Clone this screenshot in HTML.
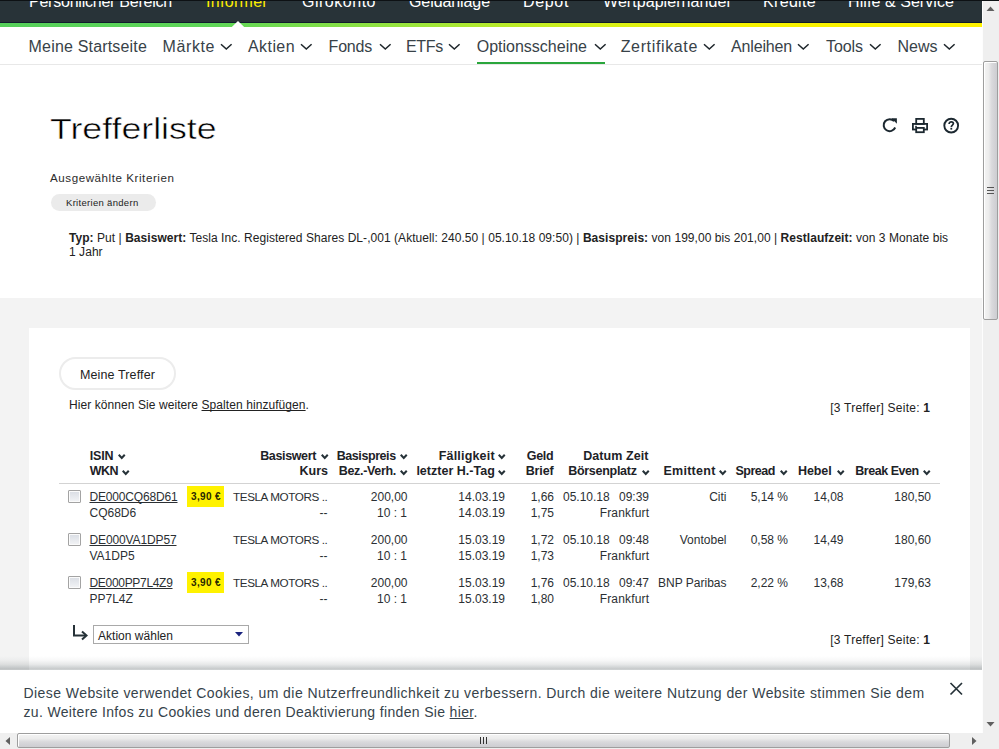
<!DOCTYPE html>
<html><head><meta charset="utf-8"><title>Trefferliste</title>
<style>
html,body{margin:0;padding:0;width:999px;height:749px;overflow:hidden;background:#fff;position:relative}
body{font-family:"Liberation Sans",sans-serif}
.t{position:absolute;white-space:nowrap;font-family:"Liberation Sans",sans-serif}
b{font-weight:bold}
u{text-decoration:underline;text-decoration-skip-ink:none}
</style></head><body>
<div style="position:absolute;left:0;top:0;width:982px;height:23px;background:#283338"></div>
<div style="position:absolute;left:0;top:0;width:982px;height:1px;background:#0d1114"></div>
<div style="position:absolute;left:0;top:22px;width:982px;height:1px;background:#101c2c"></div>
<div style="position:absolute;left:0;top:23px;width:982px;height:4px;background:linear-gradient(90deg,#55cf5a 0%,#5fd658 22%,#9be53c 42%,#d4f01a 60%,#f6f200 75%,#fff200 100%)"></div>
<svg style="position:absolute;left:231px;top:20px" width="14" height="8"><polygon points="0.8,7 7,1.1 13.2,7" fill="#fff"/></svg>
<div style="position:absolute;left:0;top:27px;width:982px;height:37px;background:#fff"></div>
<div class="t" style="top:-6.34px;font-size:16.00px;line-height:16.00px;color:#fff;letter-spacing:-0.231px;left:29.00px;">Persönlicher Bereich</div>
<div class="t" style="top:-6.34px;font-size:16.00px;line-height:16.00px;color:#ffee00;letter-spacing:0.304px;left:206.00px;">Informer</div>
<div class="t" style="top:-6.34px;font-size:16.00px;line-height:16.00px;color:#fff;letter-spacing:0.515px;left:302.00px;">Girokonto</div>
<div class="t" style="top:-6.34px;font-size:16.00px;line-height:16.00px;color:#fff;letter-spacing:-0.084px;left:409.00px;">Geldanlage</div>
<div class="t" style="top:-6.34px;font-size:16.00px;line-height:16.00px;color:#fff;letter-spacing:0.661px;left:523.00px;">Depot</div>
<div class="t" style="top:-6.34px;font-size:16.00px;line-height:16.00px;color:#fff;letter-spacing:0.063px;left:603.00px;">Wertpapierhandel</div>
<div class="t" style="top:-6.34px;font-size:16.00px;line-height:16.00px;color:#fff;letter-spacing:0.330px;left:763.00px;">Kredite</div>
<div class="t" style="top:-6.34px;font-size:16.00px;line-height:16.00px;color:#fff;letter-spacing:0.072px;left:848.00px;">Hilfe &amp; Service</div>
<div style="position:absolute;left:0;top:0;width:999px;height:1px;background:#0d1114"></div>
<div class="t" style="top:39.46px;font-size:16.00px;line-height:16.00px;color:#384248;letter-spacing:0.175px;left:28.60px;">Meine Startseite</div>
<div class="t" style="top:39.46px;font-size:16.00px;line-height:16.00px;color:#384248;letter-spacing:0.584px;left:162.60px;">Märkte</div>
<svg style="position:absolute;left:219.5px;top:42px" width="13" height="10"><polyline points="1,2.2 6.3,7.1 11.6,2.2" fill="none" stroke="#1f272c" stroke-width="1.5"/></svg>
<div class="t" style="top:39.46px;font-size:16.00px;line-height:16.00px;color:#384248;letter-spacing:0.422px;left:248.00px;">Aktien</div>
<svg style="position:absolute;left:299.5px;top:42px" width="13" height="10"><polyline points="1,2.2 6.3,7.1 11.6,2.2" fill="none" stroke="#1f272c" stroke-width="1.5"/></svg>
<div class="t" style="top:39.46px;font-size:16.00px;line-height:16.00px;color:#384248;letter-spacing:-0.213px;left:328.60px;">Fonds</div>
<svg style="position:absolute;left:378.5px;top:42px" width="13" height="10"><polyline points="1,2.2 6.3,7.1 11.6,2.2" fill="none" stroke="#1f272c" stroke-width="1.5"/></svg>
<div class="t" style="top:39.46px;font-size:16.00px;line-height:16.00px;color:#384248;letter-spacing:-0.304px;left:406.00px;">ETFs</div>
<svg style="position:absolute;left:447.5px;top:42px" width="13" height="10"><polyline points="1,2.2 6.3,7.1 11.6,2.2" fill="none" stroke="#1f272c" stroke-width="1.5"/></svg>
<div class="t" style="top:39.46px;font-size:16.00px;line-height:16.00px;color:#384248;letter-spacing:0.001px;left:476.70px;">Optionsscheine</div>
<svg style="position:absolute;left:593.5px;top:42px" width="13" height="10"><polyline points="1,2.2 6.3,7.1 11.6,2.2" fill="none" stroke="#1f272c" stroke-width="1.5"/></svg>
<div class="t" style="top:39.46px;font-size:16.00px;line-height:16.00px;color:#384248;letter-spacing:0.642px;left:620.70px;">Zertifikate</div>
<svg style="position:absolute;left:702.5px;top:42px" width="13" height="10"><polyline points="1,2.2 6.3,7.1 11.6,2.2" fill="none" stroke="#1f272c" stroke-width="1.5"/></svg>
<div class="t" style="top:39.46px;font-size:16.00px;line-height:16.00px;color:#384248;letter-spacing:-0.159px;left:731.00px;">Anleihen</div>
<svg style="position:absolute;left:796.5px;top:42px" width="13" height="10"><polyline points="1,2.2 6.3,7.1 11.6,2.2" fill="none" stroke="#1f272c" stroke-width="1.5"/></svg>
<div class="t" style="top:39.46px;font-size:16.00px;line-height:16.00px;color:#384248;letter-spacing:-0.070px;left:826.00px;">Tools</div>
<svg style="position:absolute;left:868.5px;top:42px" width="13" height="10"><polyline points="1,2.2 6.3,7.1 11.6,2.2" fill="none" stroke="#1f272c" stroke-width="1.5"/></svg>
<div class="t" style="top:39.46px;font-size:16.00px;line-height:16.00px;color:#384248;letter-spacing:-0.002px;left:897.50px;">News</div>
<svg style="position:absolute;left:942.5px;top:42px" width="13" height="10"><polyline points="1,2.2 6.3,7.1 11.6,2.2" fill="none" stroke="#1f272c" stroke-width="1.5"/></svg>
<div style="position:absolute;left:0;top:64px;width:982px;height:1px;background:#e8e8e8"></div>
<div style="position:absolute;left:477px;top:62px;width:128px;height:2px;background:#2aa63c"></div>
<div class="t" style="left:50px;top:113.61px;font-size:30px;line-height:30px;color:#000;-webkit-text-stroke:0.5px #fff;transform:scaleX(1.19);transform-origin:0 0">Trefferliste</div>
<svg style="position:absolute;left:880px;top:115px" width="82" height="22" viewBox="0 0 82 22">
<path d="M14.2,6.2 A6,6 0 1 0 15.2,12.5" fill="none" stroke="#1c2830" stroke-width="2"/>
<polygon points="11.4,3.3 16.9,3.3 16.9,8.8" fill="#1c2830"/>
<rect x="32.9" y="8.9" width="14.2" height="5.6" fill="#fff" stroke="#1c2830" stroke-width="1.8"/>
<rect x="36.2" y="3.9" width="7.6" height="5" fill="#fff" stroke="#1c2830" stroke-width="1.8"/>
<rect x="36.2" y="12.9" width="7.6" height="4.3" fill="#fff" stroke="#1c2830" stroke-width="1.8"/>
<rect x="35.2" y="10.8" width="1.6" height="1.5" fill="#1c2830"/>
<circle cx="71.2" cy="10.6" r="6.9" fill="none" stroke="#1c2830" stroke-width="1.9"/>
<path d="M69.1,9.0 C69.1,7.4 70.1,6.8 71.3,6.8 C72.6,6.8 73.4,7.6 73.4,8.6 C73.4,10.0 71.3,10.2 71.3,11.9" fill="none" stroke="#1c2830" stroke-width="1.7"/>
<rect x="70.4" y="12.8" width="1.8" height="1.8" fill="#1c2830"/>
</svg>
<div class="t" style="top:171.78px;font-size:11.60px;line-height:11.60px;color:#2b2b2b;letter-spacing:0.556px;left:50.00px;">Ausgewählte Kriterien</div>
<div style="position:absolute;left:51px;top:194px;width:105px;height:17px;border-radius:9px;background:#ebebeb"></div>
<div class="t" style="top:197.76px;font-size:9.50px;line-height:9.50px;color:#222;letter-spacing:0.307px;left:66.00px;">Kriterien ändern</div>
<div class="t" style="left:69px;top:230.59px;font-size:12px;line-height:14.5px;color:#222;letter-spacing:0.049px;width:900px"><b>Typ:</b> Put | <b>Basiswert:</b> Tesla Inc. Registered Shares DL-,001 (Aktuell: 240.50 | 05.10.18 09:50) | <b>Basispreis:</b> von 199,00 bis 201,00 | <b>Restlaufzeit:</b> von 3 Monate bis<br>1 Jahr</div>
<div style="position:absolute;left:0;top:298px;width:982px;height:435px;background:#f3f3f3"></div>
<div style="position:absolute;left:29px;top:328px;width:941px;height:405px;background:#fff"></div>
<div style="position:absolute;left:59px;top:357px;width:113px;height:29px;border:2px solid #ececec;border-radius:17px;background:#fff"></div>
<div class="t" style="top:368.62px;font-size:12.50px;line-height:12.50px;color:#222;letter-spacing:0.123px;left:80.00px;">Meine Treffer</div>
<div class="t" style="left:69.00px;top:398.84px;font-size:12.00px;line-height:12.00px;color:#222;letter-spacing:0.074px;">Hier können Sie weitere <u>Spalten hinzufügen</u>.</div>
<div class="t" style="right:69.00px;top:402.14px;font-size:12.00px;line-height:12.00px;color:#222;letter-spacing:0.242px;margin-right:-0.242px">[3 Treffer] Seite: <b>1</b></div>
<div class="t" style="right:69.00px;top:633.64px;font-size:12.00px;line-height:12.00px;color:#222;letter-spacing:0.242px;margin-right:-0.242px">[3 Treffer] Seite: <b>1</b></div>
<div class="t" style="top:449.62px;font-size:12.50px;line-height:12.50px;color:#1d2227;font-weight:bold;letter-spacing:-0.128px;left:89.70px;">ISIN</div>
<svg style="position:absolute;left:115.70px;top:452.40px" width="11" height="9"><polyline points="2.75,2.75 5.75,6.00 8.75,2.75" fill="none" stroke="#263238" stroke-width="2.0"/></svg>
<div class="t" style="top:449.62px;font-size:12.50px;line-height:12.50px;color:#1d2227;font-weight:bold;letter-spacing:-0.362px;left:260.20px;">Basiswert</div>
<svg style="position:absolute;left:318.70px;top:452.40px" width="11" height="9"><polyline points="2.75,2.75 5.75,6.00 8.75,2.75" fill="none" stroke="#263238" stroke-width="2.0"/></svg>
<div class="t" style="top:449.62px;font-size:12.50px;line-height:12.50px;color:#1d2227;font-weight:bold;letter-spacing:-0.423px;left:336.70px;">Basispreis</div>
<svg style="position:absolute;left:397.70px;top:452.40px" width="11" height="9"><polyline points="2.75,2.75 5.75,6.00 8.75,2.75" fill="none" stroke="#263238" stroke-width="2.0"/></svg>
<div class="t" style="top:449.62px;font-size:12.50px;line-height:12.50px;color:#1d2227;font-weight:bold;letter-spacing:0.192px;left:438.70px;">Fälligkeit</div>
<svg style="position:absolute;left:495.70px;top:452.40px" width="11" height="9"><polyline points="2.75,2.75 5.75,6.00 8.75,2.75" fill="none" stroke="#263238" stroke-width="2.0"/></svg>
<div class="t" style="top:449.62px;font-size:12.50px;line-height:12.50px;color:#1d2227;font-weight:bold;letter-spacing:-0.245px;left:526.70px;">Geld</div>
<div class="t" style="top:449.62px;font-size:12.50px;line-height:12.50px;color:#1d2227;font-weight:bold;letter-spacing:0.072px;left:583.20px;">Datum Zeit</div>
<div class="t" style="top:465.22px;font-size:12.50px;line-height:12.50px;color:#1d2227;font-weight:bold;letter-spacing:-0.518px;left:89.70px;">WKN</div>
<svg style="position:absolute;left:120.20px;top:468.00px" width="11" height="9"><polyline points="2.75,2.75 5.75,6.00 8.75,2.75" fill="none" stroke="#263238" stroke-width="2.0"/></svg>
<div class="t" style="top:465.22px;font-size:12.50px;line-height:12.50px;color:#1d2227;font-weight:bold;right:671.00px;">Kurs</div>
<div class="t" style="top:465.22px;font-size:12.50px;line-height:12.50px;color:#1d2227;font-weight:bold;letter-spacing:-0.314px;left:338.70px;">Bez.-Verh.</div>
<svg style="position:absolute;left:397.70px;top:468.00px" width="11" height="9"><polyline points="2.75,2.75 5.75,6.00 8.75,2.75" fill="none" stroke="#263238" stroke-width="2.0"/></svg>
<div class="t" style="top:465.22px;font-size:12.50px;line-height:12.50px;color:#1d2227;font-weight:bold;letter-spacing:0.011px;left:416.40px;">letzter H.-Tag</div>
<svg style="position:absolute;left:495.70px;top:468.00px" width="11" height="9"><polyline points="2.75,2.75 5.75,6.00 8.75,2.75" fill="none" stroke="#263238" stroke-width="2.0"/></svg>
<div class="t" style="top:465.22px;font-size:12.50px;line-height:12.50px;color:#1d2227;font-weight:bold;letter-spacing:-0.136px;left:525.70px;">Brief</div>
<div class="t" style="top:465.22px;font-size:12.50px;line-height:12.50px;color:#1d2227;font-weight:bold;letter-spacing:-0.285px;left:568.20px;">Börsenplatz</div>
<svg style="position:absolute;left:639.70px;top:468.00px" width="11" height="9"><polyline points="2.75,2.75 5.75,6.00 8.75,2.75" fill="none" stroke="#263238" stroke-width="2.0"/></svg>
<div class="t" style="top:465.22px;font-size:12.50px;line-height:12.50px;color:#1d2227;font-weight:bold;letter-spacing:0.275px;left:663.40px;">Emittent</div>
<svg style="position:absolute;left:717.20px;top:468.00px" width="11" height="9"><polyline points="2.75,2.75 5.75,6.00 8.75,2.75" fill="none" stroke="#263238" stroke-width="2.0"/></svg>
<div class="t" style="top:465.22px;font-size:12.50px;line-height:12.50px;color:#1d2227;font-weight:bold;letter-spacing:-0.463px;left:735.40px;">Spread</div>
<svg style="position:absolute;left:777.70px;top:468.00px" width="11" height="9"><polyline points="2.75,2.75 5.75,6.00 8.75,2.75" fill="none" stroke="#263238" stroke-width="2.0"/></svg>
<div class="t" style="top:465.22px;font-size:12.50px;line-height:12.50px;color:#1d2227;font-weight:bold;letter-spacing:-0.127px;left:798.10px;">Hebel</div>
<svg style="position:absolute;left:834.70px;top:468.00px" width="11" height="9"><polyline points="2.75,2.75 5.75,6.00 8.75,2.75" fill="none" stroke="#263238" stroke-width="2.0"/></svg>
<div class="t" style="top:465.22px;font-size:12.50px;line-height:12.50px;color:#1d2227;font-weight:bold;letter-spacing:-0.454px;left:855.20px;">Break Even</div>
<svg style="position:absolute;left:921.20px;top:468.00px" width="11" height="9"><polyline points="2.75,2.75 5.75,6.00 8.75,2.75" fill="none" stroke="#263238" stroke-width="2.0"/></svg>
<div style="position:absolute;left:59px;top:483px;width:881px;height:1px;background:#d3d3d3"></div>
<div style="position:absolute;left:68px;top:490px;width:11px;height:11px;border:1px solid #a3a3a3;border-radius:1px;background:linear-gradient(180deg,#d9dde4,#f3f4f6);box-shadow:inset 0 0 0 1px #fbfbfb"></div>
<div class="t" style="top:490.84px;font-size:12.00px;line-height:12.00px;color:#2b2f33;letter-spacing:-0.171px;left:89.50px;text-decoration:underline;text-decoration-skip-ink:none;">DE000CQ68D61</div>
<div class="t" style="top:506.84px;font-size:12.00px;line-height:12.00px;color:#2b2f33;left:89.50px;">CQ68D6</div>
<div style="position:absolute;left:187px;top:486px;width:37px;height:21px;background:#fff200"></div>
<div class="t" style="top:491.54px;font-size:10.00px;line-height:10.00px;color:#2a2a00;font-weight:bold;letter-spacing:0.367px;left:191.00px;">3,90 €</div>
<div class="t" style="top:491.10px;font-size:11.70px;line-height:11.70px;color:#2b2f33;letter-spacing:-0.404px;left:233.00px;">TESLA MOTORS ..</div>
<div class="t" style="top:506.84px;font-size:12.00px;line-height:12.00px;color:#2b2f33;right:671.50px;">--</div>
<div class="t" style="top:490.84px;font-size:12.00px;line-height:12.00px;color:#2b2f33;right:591.50px;">200,00</div>
<div class="t" style="top:506.84px;font-size:12.00px;line-height:12.00px;color:#2b2f33;right:592.00px;">10 : 1</div>
<div class="t" style="top:490.84px;font-size:12.00px;line-height:12.00px;color:#2b2f33;right:494.00px;">14.03.19</div>
<div class="t" style="top:506.84px;font-size:12.00px;line-height:12.00px;color:#2b2f33;right:494.00px;">14.03.19</div>
<div class="t" style="top:490.84px;font-size:12.00px;line-height:12.00px;color:#2b2f33;right:445.00px;">1,66</div>
<div class="t" style="top:506.84px;font-size:12.00px;line-height:12.00px;color:#2b2f33;right:445.00px;">1,75</div>
<div class="t" style="top:490.84px;font-size:12.00px;line-height:12.00px;color:#2b2f33;left:563.00px;">05.10.18</div>
<div class="t" style="top:490.84px;font-size:12.00px;line-height:12.00px;color:#2b2f33;right:350.00px;">09:39</div>
<div class="t" style="top:506.84px;font-size:12.00px;line-height:12.00px;color:#2b2f33;letter-spacing:0.166px;right:349.83px;">Frankfurt</div>
<div class="t" style="top:490.84px;font-size:12.00px;line-height:12.00px;color:#2b2f33;right:272.50px;">Citi</div>
<div class="t" style="top:490.84px;font-size:12.00px;line-height:12.00px;color:#2b2f33;right:211.00px;">5,14 %</div>
<div class="t" style="top:490.84px;font-size:12.00px;line-height:12.00px;color:#2b2f33;right:155.50px;">14,08</div>
<div class="t" style="top:490.84px;font-size:12.00px;line-height:12.00px;color:#2b2f33;right:68.00px;">180,50</div>
<div style="position:absolute;left:68px;top:533px;width:11px;height:11px;border:1px solid #a3a3a3;border-radius:1px;background:linear-gradient(180deg,#d9dde4,#f3f4f6);box-shadow:inset 0 0 0 1px #fbfbfb"></div>
<div class="t" style="top:533.84px;font-size:12.00px;line-height:12.00px;color:#2b2f33;letter-spacing:-0.125px;left:89.50px;text-decoration:underline;text-decoration-skip-ink:none;">DE000VA1DP57</div>
<div class="t" style="top:549.84px;font-size:12.00px;line-height:12.00px;color:#2b2f33;left:89.50px;">VA1DP5</div>
<div class="t" style="top:534.10px;font-size:11.70px;line-height:11.70px;color:#2b2f33;letter-spacing:-0.404px;left:233.00px;">TESLA MOTORS ..</div>
<div class="t" style="top:549.84px;font-size:12.00px;line-height:12.00px;color:#2b2f33;right:671.50px;">--</div>
<div class="t" style="top:533.84px;font-size:12.00px;line-height:12.00px;color:#2b2f33;right:591.50px;">200,00</div>
<div class="t" style="top:549.84px;font-size:12.00px;line-height:12.00px;color:#2b2f33;right:592.00px;">10 : 1</div>
<div class="t" style="top:533.84px;font-size:12.00px;line-height:12.00px;color:#2b2f33;right:494.00px;">15.03.19</div>
<div class="t" style="top:549.84px;font-size:12.00px;line-height:12.00px;color:#2b2f33;right:494.00px;">15.03.19</div>
<div class="t" style="top:533.84px;font-size:12.00px;line-height:12.00px;color:#2b2f33;right:445.00px;">1,72</div>
<div class="t" style="top:549.84px;font-size:12.00px;line-height:12.00px;color:#2b2f33;right:445.00px;">1,73</div>
<div class="t" style="top:533.84px;font-size:12.00px;line-height:12.00px;color:#2b2f33;left:563.00px;">05.10.18</div>
<div class="t" style="top:533.84px;font-size:12.00px;line-height:12.00px;color:#2b2f33;right:350.00px;">09:48</div>
<div class="t" style="top:549.84px;font-size:12.00px;line-height:12.00px;color:#2b2f33;letter-spacing:0.166px;right:349.83px;">Frankfurt</div>
<div class="t" style="top:533.84px;font-size:12.00px;line-height:12.00px;color:#2b2f33;right:272.50px;">Vontobel</div>
<div class="t" style="top:533.84px;font-size:12.00px;line-height:12.00px;color:#2b2f33;right:211.00px;">0,58 %</div>
<div class="t" style="top:533.84px;font-size:12.00px;line-height:12.00px;color:#2b2f33;right:155.50px;">14,49</div>
<div class="t" style="top:533.84px;font-size:12.00px;line-height:12.00px;color:#2b2f33;right:68.00px;">180,60</div>
<div style="position:absolute;left:68px;top:576px;width:11px;height:11px;border:1px solid #a3a3a3;border-radius:1px;background:linear-gradient(180deg,#d9dde4,#f3f4f6);box-shadow:inset 0 0 0 1px #fbfbfb"></div>
<div class="t" style="top:576.84px;font-size:12.00px;line-height:12.00px;color:#2b2f33;letter-spacing:-0.310px;left:89.50px;text-decoration:underline;text-decoration-skip-ink:none;">DE000PP7L4Z9</div>
<div class="t" style="top:592.84px;font-size:12.00px;line-height:12.00px;color:#2b2f33;left:89.50px;">PP7L4Z</div>
<div style="position:absolute;left:187px;top:572px;width:37px;height:21px;background:#fff200"></div>
<div class="t" style="top:577.53px;font-size:10.00px;line-height:10.00px;color:#2a2a00;font-weight:bold;letter-spacing:0.367px;left:191.00px;">3,90 €</div>
<div class="t" style="top:577.10px;font-size:11.70px;line-height:11.70px;color:#2b2f33;letter-spacing:-0.404px;left:233.00px;">TESLA MOTORS ..</div>
<div class="t" style="top:592.84px;font-size:12.00px;line-height:12.00px;color:#2b2f33;right:671.50px;">--</div>
<div class="t" style="top:576.84px;font-size:12.00px;line-height:12.00px;color:#2b2f33;right:591.50px;">200,00</div>
<div class="t" style="top:592.84px;font-size:12.00px;line-height:12.00px;color:#2b2f33;right:592.00px;">10 : 1</div>
<div class="t" style="top:576.84px;font-size:12.00px;line-height:12.00px;color:#2b2f33;right:494.00px;">15.03.19</div>
<div class="t" style="top:592.84px;font-size:12.00px;line-height:12.00px;color:#2b2f33;right:494.00px;">15.03.19</div>
<div class="t" style="top:576.84px;font-size:12.00px;line-height:12.00px;color:#2b2f33;right:445.00px;">1,76</div>
<div class="t" style="top:592.84px;font-size:12.00px;line-height:12.00px;color:#2b2f33;right:445.00px;">1,80</div>
<div class="t" style="top:576.84px;font-size:12.00px;line-height:12.00px;color:#2b2f33;left:563.00px;">05.10.18</div>
<div class="t" style="top:576.84px;font-size:12.00px;line-height:12.00px;color:#2b2f33;right:350.00px;">09:47</div>
<div class="t" style="top:592.84px;font-size:12.00px;line-height:12.00px;color:#2b2f33;letter-spacing:0.166px;right:349.83px;">Frankfurt</div>
<div class="t" style="top:576.84px;font-size:12.00px;line-height:12.00px;color:#2b2f33;right:272.50px;">BNP Paribas</div>
<div class="t" style="top:576.84px;font-size:12.00px;line-height:12.00px;color:#2b2f33;right:211.00px;">2,22 %</div>
<div class="t" style="top:576.84px;font-size:12.00px;line-height:12.00px;color:#2b2f33;right:155.50px;">13,68</div>
<div class="t" style="top:576.84px;font-size:12.00px;line-height:12.00px;color:#2b2f33;right:68.00px;">179,63</div>
<svg style="position:absolute;left:71px;top:624px" width="20" height="18"><path d="M3,1 V11.5 H15" fill="none" stroke="#263238" stroke-width="2"/><path d="M11,7.5 L15.5,11.5 L11,15.5" fill="none" stroke="#263238" stroke-width="2"/></svg>
<div style="position:absolute;left:93px;top:625px;width:154px;height:17px;border:1px solid #a9a9a9;background:#fff"></div>
<div class="t" style="top:630.04px;font-size:12.00px;line-height:12.00px;color:#222;letter-spacing:0.022px;left:98.00px;">Aktion wählen</div>
<svg style="position:absolute;left:235px;top:632px" width="9" height="5"><polygon points="0,0 8,0 4,4.5" fill="#1a237e"/></svg>
<div style="position:absolute;left:0;top:656px;width:983px;height:14px;background:linear-gradient(180deg,rgba(20,35,40,0) 0%,rgba(20,35,40,0.03) 30%,rgba(20,35,40,0.1) 60%,rgba(20,35,40,0.23) 90%,rgba(20,35,40,0.2) 100%)"></div>
<div style="position:absolute;left:0;top:670px;width:983px;height:63px;background:#fff"></div>
<div class="t" style="left:23.50px;top:685.65px;font-size:14.00px;line-height:14.00px;color:#36434b;letter-spacing:0.432px;">Diese Website verwendet Cookies, um die Nutzerfreundlichkeit zu verbessern. Durch die weitere Nutzung der Website stimmen Sie dem</div>
<div class="t" style="left:23.50px;top:704.65px;font-size:14.00px;line-height:14.00px;color:#36434b;letter-spacing:0.339px;">zu. Weitere Infos zu Cookies und deren Deaktivierung finden Sie <u>hier</u>.</div>
<svg style="position:absolute;left:948px;top:681px" width="16" height="16"><path d="M2.5,2 L14,13.5 M14,2 L2.5,13.5" stroke="#263238" stroke-width="1.7"/></svg>
<div style="position:absolute;left:982px;top:0;width:17px;height:733px;background:#efefef;border-left:1px solid #fdfdfd;box-sizing:border-box"></div>
<div style="position:absolute;left:982px;top:0;width:17px;height:1px;background:#0d1114"></div>
<svg style="position:absolute;left:986px;top:5px" width="9" height="7"><polygon points="0.5,6 4.5,1.5 8.5,6" fill="#606060"/></svg>
<div style="position:absolute;left:983px;top:61px;width:15px;height:259px;box-sizing:border-box;border:1px solid #9e9e9e;border-radius:2px;background:linear-gradient(90deg,#f4f4f4 0%,#ececec 35%,#d9d9dc 60%,#cdcdd1 100%);box-shadow:inset 1px 1px 0 #ffffff"></div>
<svg style="position:absolute;left:986px;top:185.5px" width="9" height="9"><path d="M1,1.5 H8 M1,4.5 H8 M1,7.5 H8" stroke="#555" stroke-width="1.1"/></svg>
<svg style="position:absolute;left:986px;top:721px" width="9" height="7"><polygon points="0.5,1 8.5,1 4.5,5.5" fill="#606060"/></svg>
<div style="position:absolute;left:0;top:733px;width:982px;height:16px;background:#efefef"></div>
<svg style="position:absolute;left:4px;top:736px" width="7" height="10"><polygon points="6,1 6,9 1.5,5" fill="#606060"/></svg>
<div style="position:absolute;left:17px;top:733px;width:933px;height:15px;box-sizing:border-box;border:1px solid #9e9e9e;border-radius:2px;background:linear-gradient(180deg,#f4f4f4 0%,#ececec 35%,#d9d9dc 60%,#cdcdd1 100%);box-shadow:inset 1px 1px 0 #ffffff"></div>
<svg style="position:absolute;left:479px;top:736px" width="10" height="9"><path d="M1.5,1 V8 M4.5,1 V8 M7.5,1 V8" stroke="#333" stroke-width="1"/></svg>
<svg style="position:absolute;left:971px;top:736px" width="7" height="10"><polygon points="1,1 1,9 5.5,5" fill="#606060"/></svg>
<div style="position:absolute;left:982px;top:733px;width:17px;height:16px;background:#efefef"></div>
</body></html>
